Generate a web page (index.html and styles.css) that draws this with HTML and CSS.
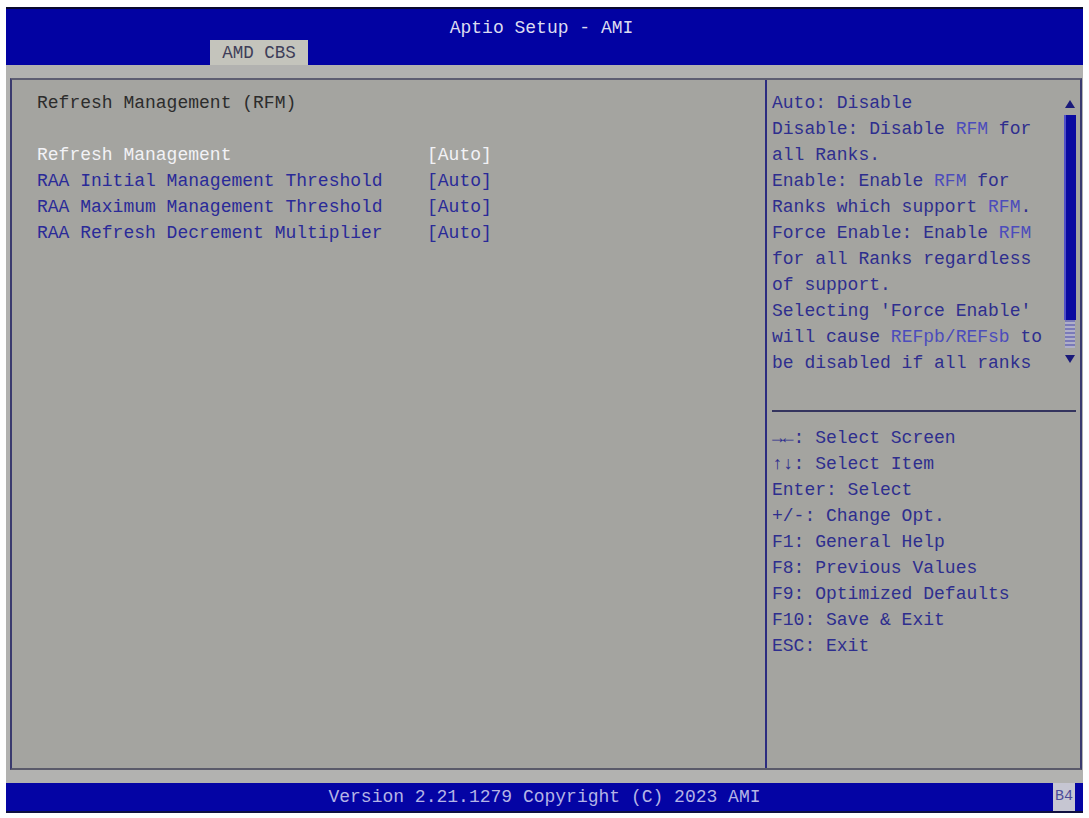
FILE: index.html
```html
<!DOCTYPE html>
<html>
<head>
<meta charset="utf-8">
<link rel="stylesheet" href="styles.css">
</head>
<body>
<div class="screen">
  <header class="header">
    <div class="title">Aptio Setup - AMI</div>
    <div class="tabs"><div class="tab">AMD CBS</div></div>
  </header>
  <div class="band">
    <div class="frame">
      <section class="left">
        <div class="line heading">Refresh Management (RFM)</div>
        <div class="line"></div>
        <div class="line item selected"><span class="label">Refresh Management</span><span class="value">[Auto]</span></div>
        <div class="line item"><span class="label">RAA Initial Management Threshold</span><span class="value">[Auto]</span></div>
        <div class="line item"><span class="label">RAA Maximum Management Threshold</span><span class="value">[Auto]</span></div>
        <div class="line item"><span class="label">RAA Refresh Decrement Multiplier</span><span class="value">[Auto]</span></div>
      </section>
      <aside class="right">
        <div class="help">
          <div class="help-text">
            <div class="line">Auto: Disable</div>
            <div class="line">Disable: Disable <span class="hl">RFM</span> for</div>
            <div class="line">all Ranks.</div>
            <div class="line">Enable: Enable <span class="hl">RFM</span> for</div>
            <div class="line">Ranks which support <span class="hl">RFM</span>.</div>
            <div class="line">Force Enable: Enable <span class="hl">RFM</span></div>
            <div class="line">for all Ranks regardless</div>
            <div class="line">of support.</div>
            <div class="line">Selecting 'Force Enable'</div>
            <div class="line">will cause <span class="hl">REFpb/REFsb</span> to</div>
            <div class="line">be disabled if all ranks</div>
          </div>
          <div class="scrollbar">
            <div class="arrow up"></div>
            <div class="thumb"></div>
            <div class="track"></div>
            <div class="arrow down"></div>
          </div>
        </div>
        <div class="keys">
          <div class="line">→←: Select Screen</div>
          <div class="line">↑↓: Select Item</div>
          <div class="line">Enter: Select</div>
          <div class="line">+/-: Change Opt.</div>
          <div class="line">F1: General Help</div>
          <div class="line">F8: Previous Values</div>
          <div class="line">F9: Optimized Defaults</div>
          <div class="line">F10: Save &amp; Exit</div>
          <div class="line">ESC: Exit</div>
        </div>
      </aside>
    </div>
  </div>
  <footer class="footer">
    <div class="version">Version 2.21.1279 Copyright (C) 2023 AMI</div>
    <div class="code">B4</div>
  </footer>
</div>
</body>
</html>
```

FILE: styles.css
```css
html, body {
  margin: 0;
  padding: 0;
  background: #ffffff;
}

body {
  font-family: "Liberation Mono", "DejaVu Sans Mono", monospace;
  font-size: 18px;
}

.screen {
  width: 1077px;
  margin: 7px 0 0 6px;
}

.header {
  height: 58px;
  box-sizing: border-box;
  background: #0202a2;
  border-top: 2px solid #0a0a30;
  display: flex;
  flex-direction: column;
  justify-content: space-between;
}

.title {
  text-align: center;
  color: #dcdcf0;
  line-height: 22px;
  padding-top: 8px;
  padding-right: 6px;
}

.tabs {
  display: flex;
  padding-left: 204px;
}

.tab {
  width: 98px;
  height: 25px;
  box-sizing: border-box;
  background: #c4c4bc;
  color: #3e3e58;
  font-size: 17.5px;
  line-height: 27px;
  text-align: center;
}

.band {
  background: #b2b2b0;
  padding: 13px 1px 13px 4px;
}

.frame {
  height: 692px;
  box-sizing: border-box;
  border: 2px solid #3a3a6e;
  border-top-color: #5e5e72;
  border-bottom-color: #5a5a6a;
  background: #a4a4a0;
  display: flex;
}

.line {
  height: 26px;
  line-height: 26px;
  white-space: pre;
}

.left {
  width: 753px;
  padding: 10px 0 0 25px;
  box-sizing: border-box;
}

.heading {
  color: #2c2c2c;
}

.item {
  display: flex;
  color: #2a2a98;
}

.item .label {
  width: 390px;
}

.item.selected {
  color: #f2f2f6;
}

.right {
  flex: 1;
  border-left: 2px solid #2c2c80;
  display: flex;
  flex-direction: column;
  color: #2e2e8e;
}

.help {
  height: 332px;
  box-sizing: border-box;
  padding: 10px 4px 0 5px;
  border-bottom: 2px solid #34345e;
  margin: 0 4px 0 5px;
  padding-left: 0;
  padding-right: 0;
  display: flex;
}

.help-text {
  flex: 1;
}

.hl {
  color: #4c4cbc;
}

.scrollbar {
  width: 12px;
  display: flex;
  flex-direction: column;
  align-items: center;
  padding-top: 10px;
}

.arrow {
  width: 0;
  height: 0;
  border-left: 5px solid transparent;
  border-right: 5px solid transparent;
}

.arrow.up {
  border-bottom: 8px solid #1a1a7a;
  margin-bottom: 7px;
}

.arrow.down {
  border-top: 8px solid #1a1a7a;
  margin-top: 7px;
}

.thumb {
  width: 12px;
  height: 205px;
  background: #0a0aa0;
  box-shadow: inset 2px 0 0 #5050c8;
}

.track {
  width: 10px;
  height: 28px;
  background: repeating-linear-gradient(180deg, #7a7ab8 0 2px, #b0b0c8 2px 4px);
}

.keys {
  padding: 13px 0 0 5px;
}

.footer {
  height: 30px;
  box-sizing: border-box;
  background: #0404a4;
  border-bottom: 2px solid #101040;
  display: flex;
  align-items: stretch;
}

.version {
  flex: 1;
  text-align: center;
  color: #b4b4e6;
  line-height: 28px;
  padding-left: 30px;
}

.code {
  width: 22px;
  margin-right: 8px;
  background: #c6c6d2;
  color: #4a4a9a;
  font-size: 15px;
  line-height: 28px;
  text-align: center;
}
```
